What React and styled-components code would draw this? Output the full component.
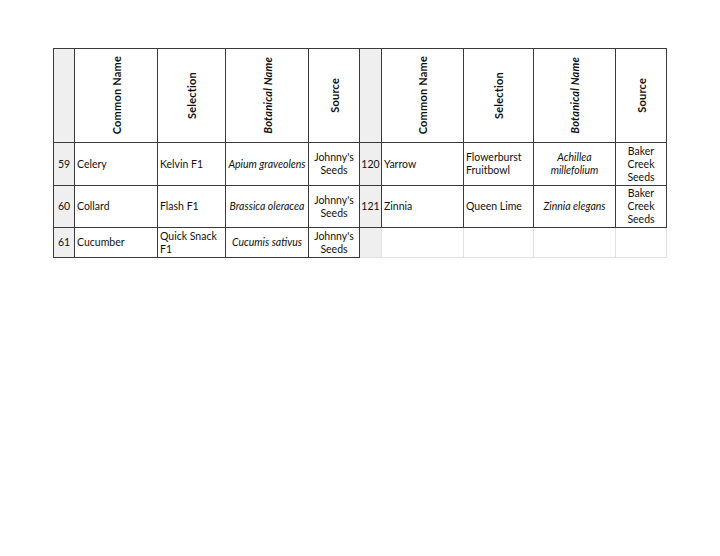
import React from 'react';
import styled, { createGlobalStyle } from 'styled-components';

const GlobalStyle = createGlobalStyle`
  body {
    margin: 0;
    background: #fff;
    font-family: Lato, "Liberation Sans", sans-serif;
    color: #111;
  }
`;

const leftCols = '21px 83px 68px 83px 51px';
const rightCols = '22px 82px 70px 82px 51px';
const rowHeights = '94px 43px 42px 30px';

const left = [
  ['59', 'Celery', 'Kelvin F1', 'Apium graveolens', ["Johnny's", 'Seeds']],
  ['60', 'Collard', 'Flash F1', 'Brassica oleracea', ["Johnny's", 'Seeds']],
  ['61', 'Cucumber', ['Quick Snack', 'F1'], 'Cucumis sativus', ["Johnny's", 'Seeds']],
];

const right = [
  ['120', 'Yarrow', ['Flowerburst', 'Fruitbowl'], ['Achillea', 'millefolium'], ['Baker', 'Creek', 'Seeds']],
  ['121', 'Zinnia', 'Queen Lime', 'Zinnia elegans', ['Baker', 'Creek', 'Seeds']],
];

const headers = [
  { label: 'Common Name' },
  { label: 'Selection' },
  { label: 'Botanical Name', italic: true },
  { label: 'Source' },
];

function Lines({ value }) {
  if (!Array.isArray(value)) return value;
  return value.map((line, i) => (
    <React.Fragment key={i}>
      {i > 0 && <br />}
      {line}
    </React.Fragment>
  ));
}

function SeedTable({ cols, rows, blankRows = 0, side }) {
  return (
    <Grid cols={cols} side={side}>
      <NumCell />
      {headers.map((h) => (
        <HeadCell key={h.label}>
          <Rotated italic={h.italic}>{h.label}</Rotated>
        </HeadCell>
      ))}
      {rows.map((r) => (
        <React.Fragment key={r[0]}>
          <NumCell>{r[0]}</NumCell>
          <Cell>
            <Lines value={r[1]} />
          </Cell>
          <Cell>
            <Lines value={r[2]} />
          </Cell>
          <Cell center italic>
            <Lines value={r[3]} />
          </Cell>
          <Cell center>
            <Lines value={r[4]} />
          </Cell>
        </React.Fragment>
      ))}
      {Array.from({ length: blankRows }).map((_, i) => (
        <React.Fragment key={'b' + i}>
          <NumCell blank />
          <Cell blank />
          <Cell blank />
          <Cell blank />
          <Cell blank />
        </React.Fragment>
      ))}
    </Grid>
  );
}

export default function App() {
  return (
    <>
      <GlobalStyle />
      <Page>
        <Sheet>
          <SeedTable cols={leftCols} rows={left} side="left" />
          <SeedTable cols={rightCols} rows={right} blankRows={1} side="right" />
        </Sheet>
      </Page>
    </>
  );
}

const Page = styled.div`
  width: 720px;
  height: 556px;
  padding: 48px 0 0 53px;
  box-sizing: border-box;
  background: #fff;
`;

const Sheet = styled.div`
  display: flex;
  align-items: flex-start;
`;

const Grid = styled.div`
  display: grid;
  grid-template-columns: ${(p) => p.cols};
  grid-template-rows: ${rowHeights};
  border-top: 1px solid #3a3a3a;
  border-left: ${(p) => (p.side === 'left' ? '1px solid #3a3a3a' : 'none')};
  font-size: 10.5px;
  line-height: 13px;
`;

const Cell = styled.div`
  box-sizing: border-box;
  border-right: 1px solid ${(p) => (p.blank ? '#e2e2e2' : '#3a3a3a')};
  border-bottom: 1px solid ${(p) => (p.blank ? '#e2e2e2' : '#3a3a3a')};
  display: flex;
  align-items: center;
  justify-content: ${(p) => (p.center ? 'center' : 'flex-start')};
  text-align: ${(p) => (p.center ? 'center' : 'left')};
  font-style: ${(p) => (p.italic ? 'italic' : 'normal')};
  padding: 0 ${(p) => (p.center ? '0' : '2px')};
  white-space: ${(p) => (p.italic ? 'nowrap' : 'normal')};
  overflow: hidden;
`;

const NumCell = styled(Cell)`
  background: #efefef;
  justify-content: center;
  padding: 0;
  white-space: nowrap;
`;

const HeadCell = styled(Cell)`
  justify-content: center;
  padding: 0;
`;

const Rotated = styled.span`
  writing-mode: vertical-rl;
  transform: rotate(180deg);
  font-weight: 700;
  font-size: 11px;
  letter-spacing: 0.2px;
  font-style: ${(p) => (p.italic ? 'italic' : 'normal')};
  white-space: nowrap;
`;
